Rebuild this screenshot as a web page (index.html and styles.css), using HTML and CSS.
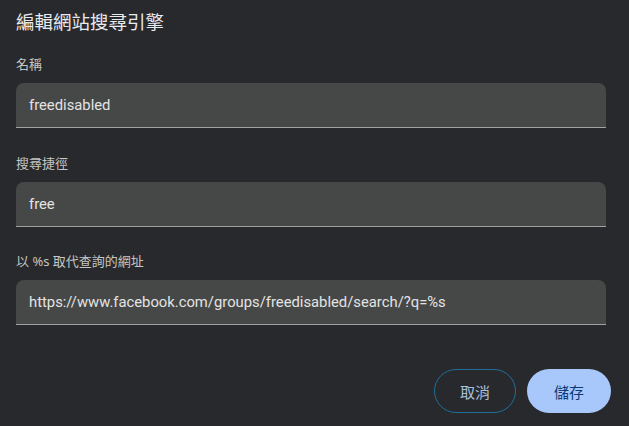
FILE: index.html
```html
<!DOCTYPE html>
<html lang="zh-Hant">
<head>
<meta charset="utf-8">
<link rel="stylesheet" href="styles.css">
</head>
<body>
<div class="dialog">
  <h1 class="title">編輯網站搜尋引擎</h1>
  <div class="field">
    <label class="label">名稱</label>
    <div class="input">freedisabled</div>
  </div>
  <div class="field">
    <label class="label">搜尋捷徑</label>
    <div class="input">free</div>
  </div>
  <div class="field">
    <label class="label">以 %s 取代查詢的網址</label>
    <div class="input">https://www.facebook.com/groups/freedisabled/search/?q=%s</div>
  </div>
  <div class="actions">
    <button class="btn cancel">取消</button>
    <button class="btn save">儲存</button>
  </div>
</div>
</body>
</html>
```
FILE: styles.css
```css
html, body {
  margin: 0;
  padding: 0;
  background: #28292c;
  width: 629px;
  height: 426px;
  overflow: hidden;
}
body {
  font-family: "Noto Sans", "Noto Sans CJK TC", sans-serif;
}
.dialog {
  padding: 8px 23px 0 16px;
  display: flex;
  flex-direction: column;
}
.title {
  margin: 0;
  font-size: 18.5px;
  font-weight: 400;
  color: #e8eaed;
  line-height: 28px;
}
.field {
  display: flex;
  flex-direction: column;
  margin-top: 19px;
}
.field + .field {
  margin-top: 26px;
}
.field + .field + .field {
  margin-top: 25px;
}
.label {
  font-size: 13px;
  color: #c4c7c5;
  line-height: 18px;
  margin-bottom: 10px;
}
.input {
  height: 44px;
  background: #464847;
  border-radius: 8px 8px 0 0;
  border-bottom: 1px solid #a0a3a2;
  color: #e3e3e3;
  font-family: Roboto, "Noto Sans CJK TC", sans-serif;
  font-size: 14.8px;
  line-height: 44px;
  padding: 0 13px;
}
.actions {
  display: flex;
  justify-content: flex-end;
  gap: 11px;
  margin-top: 44px;
  margin-right: -5px;
}
.btn {
  height: 44px;
  border-radius: 22px;
  font-family: "Noto Sans CJK TC", sans-serif;
  font-size: 15px;
  padding: 0;
  cursor: pointer;
}
.cancel {
  width: 82px;
  background: transparent;
  border: 1px solid #1f6f9a;
  color: #a8c0de;
}
.save {
  width: 84px;
  background: #a8c7fa;
  border: none;
  color: #0b3a78;
}
```
